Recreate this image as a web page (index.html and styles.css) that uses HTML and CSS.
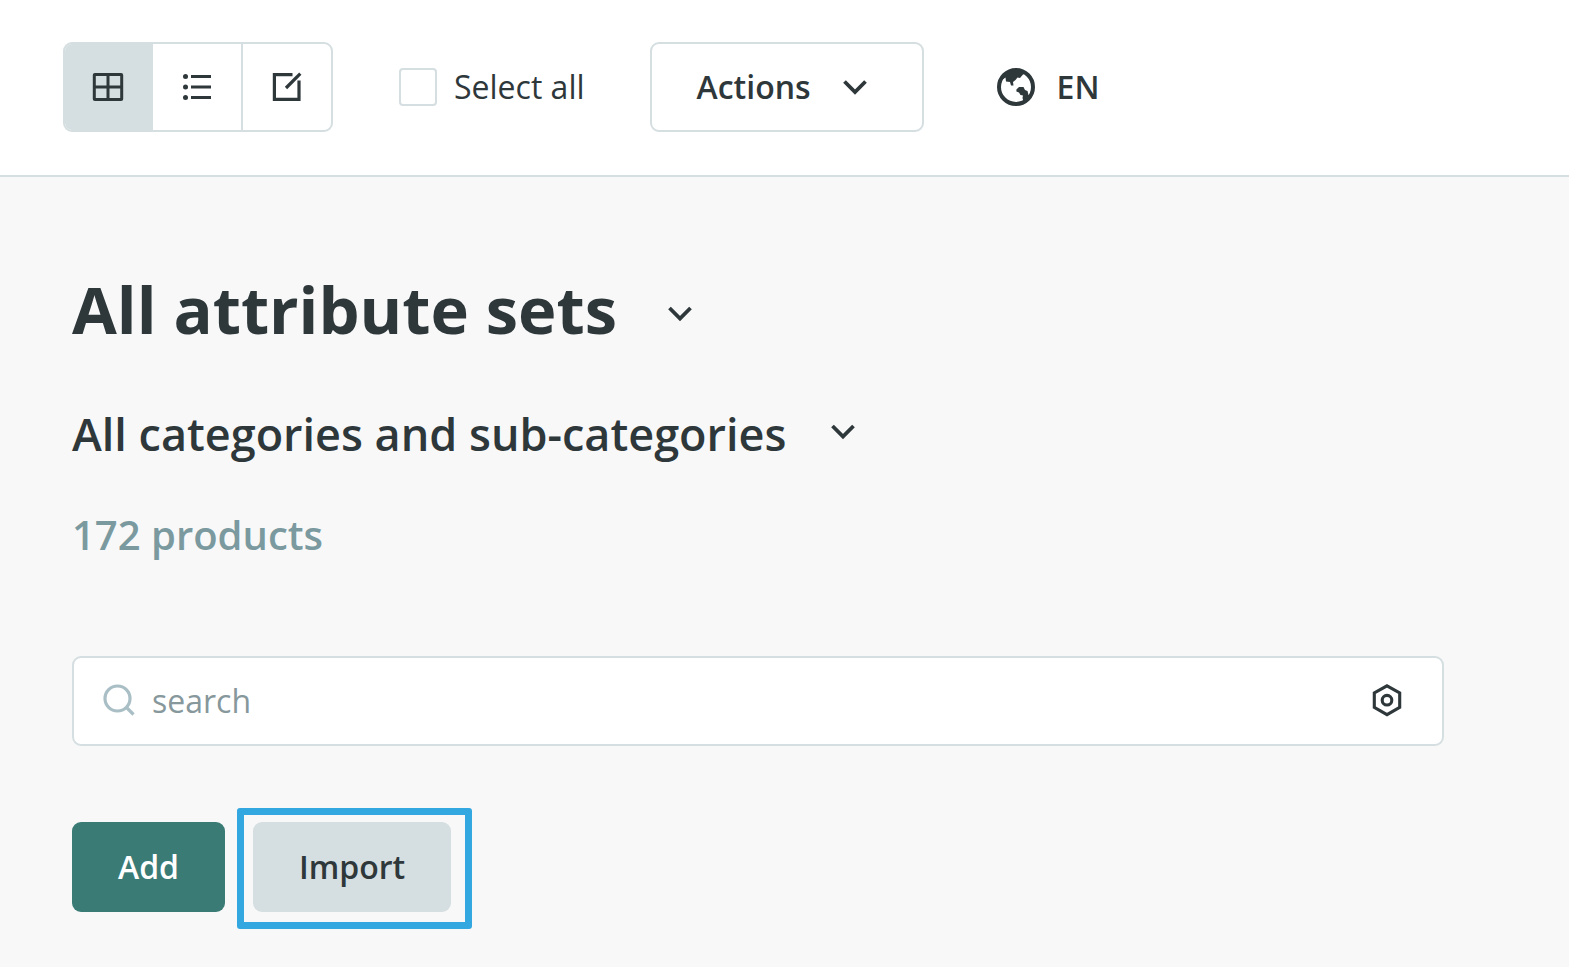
FILE: index.html
```
<!DOCTYPE html>
<html lang="en">
<head>
<meta charset="utf-8">
<meta name="viewport" content="width=device-width, initial-scale=1">
<title>Products</title>
<link rel="stylesheet" href="styles.css">
</head>
<body>
<header class="toolbar">
  <div class="view-switch" role="group" aria-label="View">
    <button class="view-button view-button-active" type="button" aria-label="Grid view" aria-pressed="true">
      <svg class="icon" width="32" height="32" viewBox="0 0 32 32" fill="none" stroke="currentColor" stroke-width="3"><rect x="2.3" y="3.5" width="27.4" height="25" rx="0.6"/><path d="M16 3.5v25M2.3 16h27.4"/></svg>
    </button>
    <button class="view-button" type="button" aria-label="List view" aria-pressed="false">
      <svg class="icon" width="32" height="32" viewBox="0 0 32 32" fill="none" stroke="currentColor" stroke-width="3.2"><path d="M10 5.5h20M10 16h20M10 26.5h20"/><g fill="currentColor" stroke="none"><circle cx="4.500" cy="5.500" r="2.500"/><circle cx="4.500" cy="16" r="2.500"/><circle cx="4.500" cy="26.500" r="2.500"/></g></svg>
    </button>
    <button class="view-button" type="button" aria-label="Edit view" aria-pressed="false">
      <svg class="icon" width="32" height="32" viewBox="0 0 32 32" fill="none" stroke="currentColor" stroke-width="3.2"><path d="M21.500 3.600H3.400v24.800H28V9.500"/><path d="M15 17L29.300 2.700"/></svg>
    </button>
  </div>
  <label class="select-all"><input class="checkbox" type="checkbox">Select all</label>
  <button class="button actions" type="button">Actions
    <svg class="icon" width="26" height="16" viewBox="0 0 26 16" fill="none" stroke="currentColor" stroke-width="3.800"><path d="M2.500 2.500L13 13L23.500 2.500"/></svg>
  </button>
  <button class="language" type="button">
    <svg class="icon" width="38" height="38" viewBox="0 0 38 38"><circle cx="19" cy="19" r="17" fill="none" stroke="currentColor" stroke-width="4"/><path fill="currentColor" d="M5 12L8.500 9.500L9 13.500L13 14L14 17.500L16.500 17.500L16 14L18.500 12L20.500 9.500L23 10L26 6.500L29 5.500L19 1L10 4Z"/><path fill="currentColor" d="M19.400 21.500L22 19L26.500 19L28 22L30.500 23L31.500 27L34 28L27 35L25.500 30L26 27.500L23.500 27L22 24.500L19.400 23.500Z"/></svg>
    EN
  </button>
</header>
<main class="content">
  <h1 class="title"><button class="picker title-picker" type="button">All attribute sets
    <svg class="icon" width="26" height="26" viewBox="0 0 26 26" fill="none" stroke="currentColor" stroke-width="3.800"><path d="M2.500 12L13 22.500L23.500 12"/></svg></button></h1>
  <h2 class="category"><button class="picker category-picker" type="button">All categories and sub-categories
    <svg class="icon" width="26" height="22" viewBox="0 0 26 22" fill="none" stroke="currentColor" stroke-width="3.800"><path d="M2.500 3L13 13.500L23.500 3"/></svg></button></h2>
  <p class="count">172 products</p>
  <form class="search" role="search">
    <svg class="icon search-icon" width="32" height="34" viewBox="0 0 32 34" fill="none" stroke="currentColor" stroke-width="3.200"><circle cx="14.500" cy="14.500" r="12.500"/><path d="M23 23l7.500 7.500"/></svg>
    <input class="search-input" type="search" placeholder="search" aria-label="search">
    <button class="search-settings" type="button" aria-label="Search settings">
      <svg class="icon" width="32" height="34" viewBox="0 0 32 34" fill="none" stroke="currentColor" stroke-width="3.100"><path d="M16 1.800l12.700 7.200v14.400L16 30.600L3.300 23.400V9z"/><circle cx="16" cy="16.200" r="4.800"/></svg>
    </button>
  </form>
  <div class="button-row">
    <button class="button add" type="button">Add</button>
    <div class="highlight"><button class="button import" type="button">Import</button></div>
  </div>
</main>
</body>
</html>
```
FILE: styles.css
```
* {
  box-sizing: border-box;
}

body {
  margin: 0;
  min-height: 100vh;
  background: #f8f8f8;
  color: #2e373a;
  font: 400 32px/44px "Open Sans", sans-serif;
}

button,
input {
  margin: 0;
  padding: 0;
  border: 0;
  background: none;
  color: inherit;
  font: inherit;
}

button {
  cursor: pointer;
}

.icon {
  display: block;
  flex: none;
}

.toolbar {
  display: flex;
  align-items: center;
  padding: 42px 63px 43px;
  border-bottom: 2px solid #d5dee0;
  background: #fff;
}

.view-switch {
  display: flex;
  overflow: hidden;
  border: 2px solid #d5dee0;
  border-radius: 9px;
}

.view-button {
  display: flex;
  align-items: center;
  justify-content: center;
  width: 90px;
  height: 86px;
  border-left: 2px solid #d5dee0;
}

.view-button:first-child {
  width: 86px;
  border-left: 0;
}

.view-button-active {
  background: #d5dee0;
}

.select-all {
  display: flex;
  align-items: center;
  gap: 17px;
  margin-left: 66px;
}

.checkbox {
  width: 38px;
  height: 38px;
  border: 2px solid #d5dee0;
  border-radius: 4px;
  background: #fff;
  appearance: none;
}

.checkbox:checked {
  background: #3a7b76;
}

.button {
  height: 90px;
  padding: 0 46px;
  border-radius: 9px;
  font-weight: 600;
}

.actions {
  display: flex;
  align-items: center;
  gap: 31px;
  width: 274px;
  margin-left: 65px;
  padding: 0 45px;
  border: 2px solid #d5dee0;
}

.language {
  display: flex;
  align-items: center;
  gap: 22px;
  margin-left: 73px;
  font-weight: 600;
}

.content {
  padding: 88px 125px 38px 72px;
}

.title,
.category,
.count {
  margin: 0;
}

.picker {
  display: flex;
  align-items: center;
  gap: 50px;
}

.title-picker {
  font-size: 65px;
  font-weight: 700;
  line-height: 88px;
}

.category {
  margin-top: 50px;
}

.category-picker {
  gap: 44px;
  font-size: 45px;
  font-weight: 600;
  line-height: 62px;
}

.count {
  margin-top: 42px;
  color: #7b9a9f;
  font-size: 40px;
  font-weight: 600;
  line-height: 56px;
}

.search {
  display: flex;
  align-items: center;
  height: 90px;
  margin-top: 93px;
  padding: 0 39px 0 29px;
  border: 2px solid #d5dee0;
  border-radius: 9px;
  background: #fff;
}

.search-icon {
  color: #a9bfc5;
}

.search-input {
  flex: 1;
  min-width: 0;
  margin-left: 17px;
  outline: 0;
}

.search-input::placeholder {
  color: #87989c;
  opacity: 1;
}

.button-row {
  display: flex;
  align-items: baseline;
  gap: 12px;
  margin-top: 62px;
}

.add {
  background: #3a7b76;
  color: #fff;
}

.highlight {
  padding: 7px 14px 10px 9px;
  border: 7px solid #33a7df;
  border-radius: 3px;
}

.import {
  background: #d5dee0;
}
```
